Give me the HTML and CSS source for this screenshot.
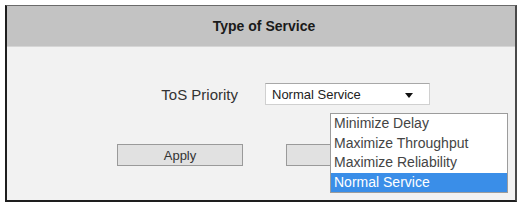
FILE: index.html
```html
<!DOCTYPE html>
<html>
<head>
<meta charset="utf-8">
<link rel="stylesheet" href="styles.css">
</head>
<body>
<div class="panel">
  <div class="panel-head">Type of Service</div>
  <div class="panel-body">
    <div class="form-row">
      <span class="label">ToS Priority</span>
      <div class="select">
        <span class="select-value">Normal Service</span>
        <span class="select-arrow"></span>
      </div>
    </div>
    <div class="button-row">
      <div class="btn">Apply</div>
      <div class="btn"></div>
    </div>
    <ul class="dropdown">
      <li class="option">Minimize Delay</li>
      <li class="option">Maximize Throughput</li>
      <li class="option">Maximize Reliability</li>
      <li class="option selected">Normal Service</li>
    </ul>
  </div>
</div>
</body>
</html>
```
FILE: styles.css
```css
html, body {
  margin: 0;
  padding: 0;
  background: #ffffff;
}
body {
  font-family: "Liberation Sans", Arial, sans-serif;
  color: #333;
}
.panel {
  margin: 5px 0 0 5px;
  width: 512px;
  height: 197px;
  box-sizing: border-box;
  border-top: 1px solid #6a6a6a;
  border-right: 2px solid #4a4a4a;
  border-bottom: 2px solid #1e1e1e;
  border-left: 2px solid #1e1e1e;
  background: #f2f2f2;
  position: relative;
  display: flex;
  flex-direction: column;
}
.panel-head {
  height: 40px;
  background: #c3c3c3;
  display: flex;
  align-items: center;
  justify-content: center;
  font-weight: bold;
  font-size: 14px;
  color: #1a1a1a;
  padding-left: 6px;
  border-bottom: 1px solid #d6d6d6;
}
.panel-body {
  flex: 1;
  display: flex;
  flex-direction: column;
  padding-top: 36px;
}
.form-row {
  display: flex;
  align-items: center;
}
.label {
  width: 231px;
  text-align: right;
  font-size: 15px;
  color: #333;
}
.select {
  margin-left: 27px;
  width: 165px;
  height: 22px;
  box-sizing: border-box;
  background: #fff;
  border: 1px solid #d0d0d0;
  border-top-color: #a8a8a8;
  display: flex;
  align-items: center;
  padding-left: 6px;
  padding-right: 16px;
  justify-content: space-between;
}
.select-value {
  font-size: 13px;
  color: #222;
}
.select-arrow {
  width: 0;
  height: 0;
  border-left: 4px solid transparent;
  border-right: 4px solid transparent;
  border-top: 5px solid #111;
  margin-top: 2px;
}
.button-row {
  display: flex;
  margin-top: 39px;
  padding-left: 110px;
  gap: 43px;
}
.btn {
  width: 126px;
  height: 22px;
  box-sizing: border-box;
  background: #e1e1e1;
  border: 1px solid #9a9a9a;
  display: flex;
  align-items: center;
  justify-content: center;
  font-size: 13px;
  color: #333;
}
.dropdown {
  position: absolute;
  left: 323px;
  top: 107px;
  width: 178px;
  margin: 0;
  padding: 0;
  list-style: none;
  background: #fff;
  border: 1px solid #9c9c9c;
  box-sizing: border-box;
}
.option {
  height: 19.5px;
  line-height: 19.5px;
  padding-left: 3px;
  font-size: 14px;
  color: #444;
}
.option.selected {
  background: #3a8ee8;
  color: #fff;
}
```
